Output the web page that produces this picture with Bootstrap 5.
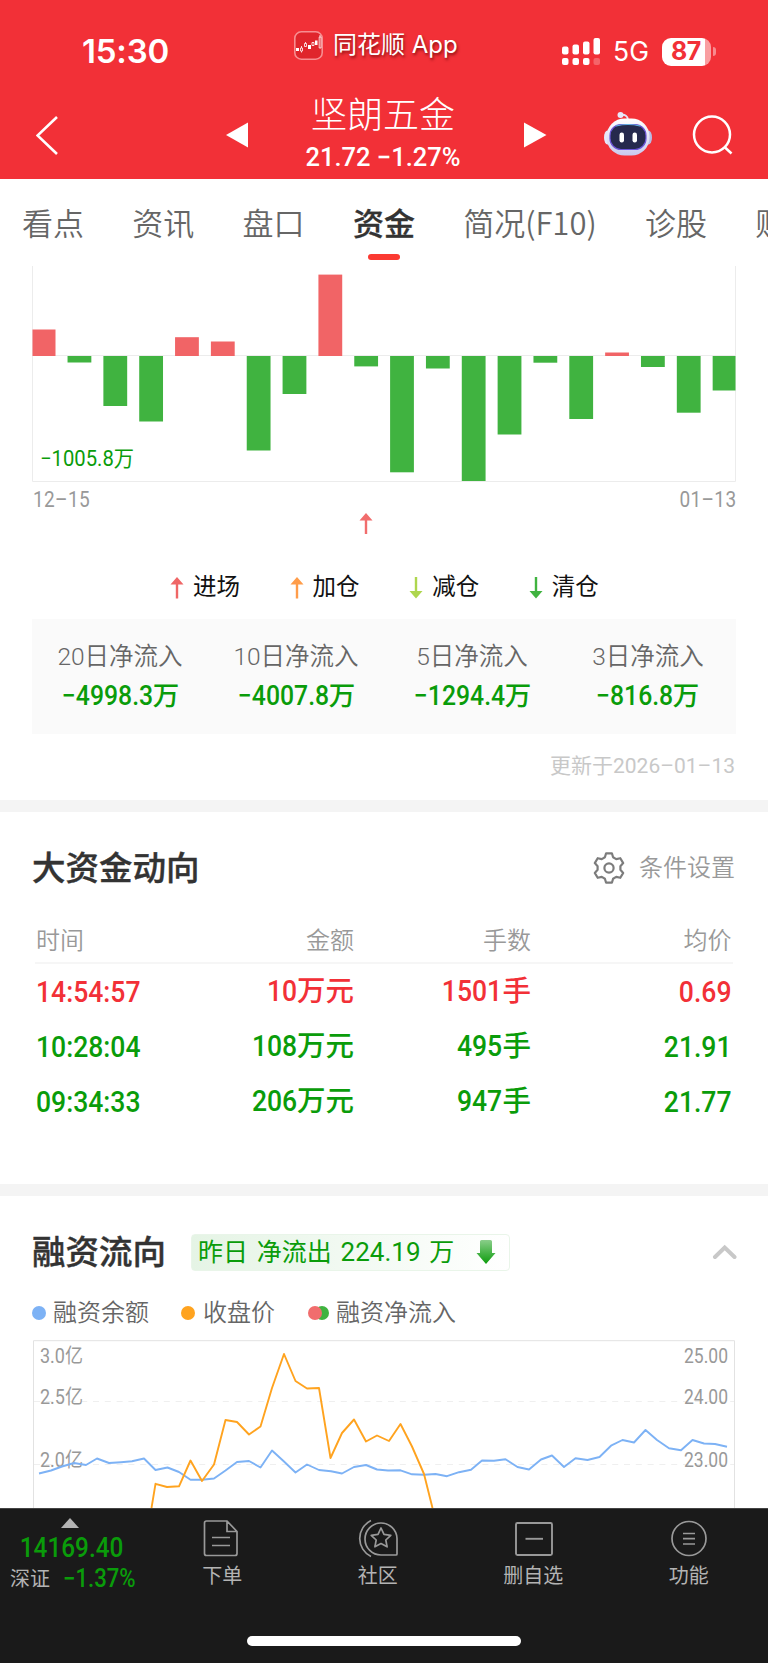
<!DOCTYPE html>
<html lang="zh-CN">
<head>
<meta charset="utf-8">
<meta name="viewport" content="width=device-width, initial-scale=1">
<title>坚朗五金 资金</title>
<link href="https://cdn.jsdelivr.net/npm/bootstrap@5.3.0/dist/css/bootstrap.min.css" rel="stylesheet">
<style>
:root{--up:#f23037;--down:#0a9c0a;--cjk:"Noto Sans CJK SC",sans-serif}
body{width:768px;height:1663px;overflow:hidden;background:#fff;color:#333;font-family:Roboto,var(--cjk);line-height:1}
svg{display:block;flex:none}
.num{font-weight:500}
/* narrowed figures; the side named by the modifier stays put */
.nx{display:inline-block;transform:scaleX(.885);transform-origin:right}
.nx.l{transform-origin:left}
.nx.c{transform-origin:center}
.c-up{color:var(--up)}.c-down{color:var(--down)}
.head-red{height:179px;background:var(--up);color:#fff}
.status{height:90px;padding:13px 52px 0 82px;font-family:Inter,var(--cjk)}
.clock{width:212px;font-size:33px;font-weight:600;letter-spacing:-.2px}
.app-name{width:229px;font-size:24px;text-shadow:1px 2px 3px rgba(90,0,0,.7);margin-top:-13px}
.app-name svg{margin-right:10px}
.net{font-size:26.5px;margin:0 13px 0 12.5px}
.batt{width:49px;height:28px;border-radius:9px;background:linear-gradient(90deg,#fff 43px,#f99ea1 43px);color:var(--up);font-weight:700;font-size:25px;letter-spacing:-.3px;padding-right:1px}
.batt-tip{width:3px;height:9px;border-radius:0 4px 4px 0;background:#f88a8e;margin-left:2px}
.titlebar{height:89px;padding:0 34px 0 36px}
.stock{width:277px;padding-right:6px}
.stock .name{font-size:36px;font-weight:300;line-height:40px;margin-top:-1px}
.stock .quote{font-size:25.5px;line-height:30px;margin-top:6px}
.tabs{height:87px;padding-left:22px;gap:48.3px;font-size:31px;color:#666;font-family:var(--cjk);font-weight:350;white-space:nowrap;overflow:hidden}
.tabs .tab{height:87px;line-height:86px;flex:none}
.tabs .tab.on{color:#333;font-weight:500;position:relative;-webkit-text-stroke:.3px #333}
.tabs .tab.on::after{content:"";position:absolute;left:15px;bottom:6px;width:32px;height:6px;border-radius:3px;background:#fb3a32}
.flow-dates{padding:5px 32px 0 33px;font-size:21.5px;color:#999;height:30px;font-weight:400;letter-spacing:.4px}
.legend-pos{padding:5px 0 0 170px;height:67px;color:#111;font-size:23.5px}
.legend-pos>div{width:119.6px;gap:9px}
.sum-box{margin:0 32px;height:115px;background:#fafafa;text-align:center}
.sum-box .lab{font-size:24.5px;color:#666;font-weight:350;line-height:30px}
.sum-box .val{font-size:28px;line-height:30px;margin-top:9px;padding-right:11px}
.sum-box .val i{font-style:normal;font-size:26.5px}
.updated{height:66px;padding:0 33px 2px;font-size:21px;color:#c8c8c8}
.band{height:12px;background:#f4f4f4}
h2{font-family:var(--cjk);font-size:33.5px;font-weight:500;color:#333;margin:-4px 0 0 -1px;line-height:40px;-webkit-text-stroke:.4px #333}
.big-head{height:112px;padding:0 33px}
.big-head .set{font-size:24px;color:#999;gap:14px;font-weight:350}
.trades{margin:0 35px;height:260px}
.trades .r{display:grid;grid-template-columns:160px 159px 177px 200.500px;height:55px;align-items:center;font-size:30px;text-align:right}
.trades .r>:first-child{text-align:left;padding-left:1px}
.trades .r.th0{height:40px;font-size:24px;font-weight:350;color:#999;border-bottom:2px solid #f6f6f6;padding:0 0 5px}
.trades .r i{font-style:normal;font-size:28.5px}
.fin-head{height:89px;padding:23px 31px 0 33px}
.flow-tag{margin-left:25px;width:319px;height:37px;border:1.5px solid #e9f5e9;border-radius:4px;background:linear-gradient(90deg,#e5f4e5,#fff);color:var(--down);font-size:25px;padding:0 13px 0 6px;white-space:nowrap;word-spacing:2.6px}
.flow-tag b{font-weight:400;font-size:26px}
.fin-legend{height:55px;padding-left:32px;font-size:24px;font-weight:350;color:#666}
.fin-legend .dot{width:14px;height:14px;border-radius:50%;flex:none}
.fin-chart text{font-size:20.5px;fill:#999}
.dock{height:155px;background:#1a1a1a;color:#b3b3b3;font-size:20px;border-top:1px solid #444;position:relative}
.dock .cell{width:155.500px;flex:none;padding-top:8.500px;gap:8px}
.dock .cell svg{height:40px}
.dock .idx{width:144.500px;flex:none;padding:9px 4px 0 0;white-space:nowrap}
.home{position:absolute;left:247px;bottom:17px;width:274px;height:10px;border-radius:5px;background:#fff}
</style>
</head>
<body>
<header class="head-red">
  <div class="status d-flex align-items-center">
    <div class="clock">15:30</div>
    <div class="app-name d-flex align-items-center">
      <svg width="29" height="29" viewBox="0 0 29 29"><rect x=".8" y=".8" width="27.4" height="27.4" rx="6.5" fill="#e0252c" stroke="#f78e91" stroke-width="1.6"/><g fill="#fff"><path d="M2 17h3v3H2zM14 14h3v4h-3zM21 9.500h2.500v4.500H21z"/></g><g fill="none" stroke="#fff" stroke-width=".8"><path d="M6.500 17h2v3h-2zM10.500 12.500h2v3h-2zM18 11.500h2v3h-2zM25.200 6h1.800v11h-1.800zM7.500 15v2M7.500 20v1.500M11.500 11v1.500M26 4v2"/></g></svg>
      <span>同花顺 App</span>
    </div>
    <div class="d-flex align-items-center ms-auto">
      <svg width="39" height="28" viewBox="0 0 39 28" fill="#fff"><rect y="8.500" width="6.500" height="8" rx="2"/><rect x="10.500" y="6.500" width="6.500" height="10" rx="2"/><rect x="21" y="3.500" width="6.500" height="13" rx="2"/><rect x="31.500" width="6.500" height="16.500" rx="2"/><rect y="20" width="6.500" height="7" rx="2"/><rect x="10.500" y="20" width="6.500" height="7" rx="2"/><rect x="21" y="20" width="6.500" height="7" rx="2"/><rect x="31.500" y="20" width="6.500" height="7" rx="2" opacity=".25"/></svg>
      <span class="net">5G</span>
      <span class="batt d-flex align-items-center justify-content-center">87</span><span class="batt-tip"></span>
    </div>
  </div>
  <div class="titlebar d-flex align-items-center">
    <svg width="190" height="40" viewBox="36 115 190 40" fill="none" stroke="#fff" stroke-width="2.600"><path d="M57 117 37.500 135.500 57 154"/></svg>
    <svg width="22" height="26" viewBox="0 0 22 26" fill="#fff"><path d="M22 .5v25L0 13z"/></svg>
    <div class="stock text-center"><div class="name">坚朗五金</div><div class="quote num">21.72 −1.27%</div></div>
    <svg width="23" height="26" viewBox="0 0 23 26" fill="#fff"><path d="M0 .5v25L22.500 13z"/></svg>
    <svg width="50" height="46" viewBox="0 0 50 46" style="margin-left:56px;margin-top:-1px"><defs><linearGradient id="shell" x1="0" y1="0" x2="0" y2="1"><stop offset="0" stop-color="#fff"/><stop offset="1" stop-color="#c9c9ee"/></linearGradient></defs><path d="M17.500 4q7-1 7.500 5" fill="none" stroke="#e3e3f5" stroke-width="2"/><circle cx="17.500" cy="4" r="3" fill="#e8e8fa"/><ellipse cx="4.500" cy="26.500" rx="3.500" ry="7" fill="#e7e7f8"/><ellipse cx="45.500" cy="26.500" rx="3.500" ry="7" fill="#b9bbe4"/><rect x="3.500" y="7.500" width="43" height="37" rx="18" fill="url(#shell)"/><rect x="7" y="13.500" width="36" height="25" rx="11" fill="#26294d" stroke="#6d55d8" stroke-width="1.200"/><path d="M13 15q12-3 24 0" stroke="#63b8df" stroke-width="1.200" fill="none"/><rect x="16.500" y="21.500" width="4.500" height="10" rx="2.200" fill="#fff"/><rect x="29.500" y="21.500" width="4.500" height="10" rx="2.200" fill="#fff"/></svg>
    <svg width="42" height="42" viewBox="0 0 42 42" style="margin-left:39px" fill="none" stroke="#fff" stroke-width="2.500"><circle cx="20" cy="20.500" r="18"/><path d="m32.500 33 7 6.500"/></svg>
  </div>
</header>
<nav class="tabs d-flex">
  <span class="tab">看点</span><span class="tab">资讯</span><span class="tab">盘口</span><span class="tab on">资金</span><span class="tab">简况(F10)</span><span class="tab">诊股</span><span class="tab">财务</span>
</nav>
<svg id="flow" width="768" height="216" viewBox="0 266 768 216"></svg>
<div class="flow-dates d-flex justify-content-between align-items-center"><span class="nx l">12–15</span><span class="nx">01–13</span></div>
<svg width="768" height="40" viewBox="0 512 768 40" fill="#f16d6d"><path d="M366 513l6.500 7.500H367.200V534H364.800V520.500H359.500z"/></svg>
<div class="legend-pos d-flex align-items-center">
  <div class="d-flex align-items-center"><svg width="14" height="22" viewBox="0 0 14 22" fill="#ef6666"><path id="arr" d="M7 0l6.500 7.500H8.200V21.500H5.800V7.500H.5z"/></svg>进场</div>
  <div class="d-flex align-items-center"><svg width="14" height="22" viewBox="0 0 14 22" fill="#ff9d4a"><use href="#arr"/></svg>加仓</div>
  <div class="d-flex align-items-center"><svg width="14" height="22" viewBox="0 0 14 22" fill="#aed64e"><use href="#arr" transform="matrix(1 0 0 -1 0 21.500)"/></svg>减仓</div>
  <div class="d-flex align-items-center"><svg width="14" height="22" viewBox="0 0 14 22" fill="#40b340"><use href="#arr" transform="matrix(1 0 0 -1 0 21.500)"/></svg>清仓</div>
</div>
<div class="sum-box row g-0 align-items-center">
  <div class="col-3"><div class="lab">20日净流入</div><div class="val num c-down"><span class="nx">−4998.3</span><i>万</i></div></div>
  <div class="col-3"><div class="lab">10日净流入</div><div class="val num c-down"><span class="nx">−4007.8</span><i>万</i></div></div>
  <div class="col-3"><div class="lab">5日净流入</div><div class="val num c-down"><span class="nx">−1294.4</span><i>万</i></div></div>
  <div class="col-3"><div class="lab">3日净流入</div><div class="val num c-down"><span class="nx">−816.8</span><i>万</i></div></div>
</div>
<div class="updated d-flex justify-content-end align-items-center">更新于2026–01–13</div>
<div class="band"></div>
<section>
  <div class="big-head d-flex justify-content-between align-items-center">
    <h2>大资金动向</h2>
    <div class="set d-flex align-items-center"><svg width="32" height="32" viewBox="0 0 32 32" fill="none" stroke="#7c7c7c" stroke-width="2.200" stroke-linejoin="round"><path d="M13.100 1.300H18.900L20.100 5.300 23.200 7.100 27.300 6.200 30.200 11.100 27.400 14.200V17.800L30.200 20.900 27.300 25.800 23.200 24.900 20.100 26.700 18.900 30.700H13.100L11.900 26.700 8.800 24.900 4.700 25.800 1.800 20.900 4.600 17.800V14.200L1.800 11.100 4.700 6.200 8.800 7.100 11.900 5.300z"/><circle cx="16" cy="16" r="4.600"/></svg>条件设置</div>
  </div>
  <div class="trades">
    <div class="r th0"><span>时间</span><span>金额</span><span>手数</span><span>均价</span></div>
    <div class="r num c-up"><span><span class="nx l">14:54:57</span></span><span><span class="nx">10</span><i>万元</i></span><span><span class="nx">1501</span><i>手</i></span><span><span class="nx">0.69</span></span></div>
    <div class="r num c-down"><span><span class="nx l">10:28:04</span></span><span><span class="nx">108</span><i>万元</i></span><span><span class="nx">495</span><i>手</i></span><span><span class="nx">21.91</span></span></div>
    <div class="r num c-down"><span><span class="nx l">09:34:33</span></span><span><span class="nx">206</span><i>万元</i></span><span><span class="nx">947</span><i>手</i></span><span><span class="nx">21.77</span></span></div>
  </div>
</section>
<div class="band"></div>
<section>
  <div class="fin-head d-flex align-items-center">
    <h2>融资流向</h2>
    <div class="flow-tag d-flex align-items-center justify-content-between"><span>昨日 净流出 <b>224.19</b> 万</span>
      <svg width="20" height="24" viewBox="0 0 20 24"><defs><linearGradient id="dn" x1="0" y1="0" x2="0" y2="1"><stop offset="0" stop-color="#8ace8a"/><stop offset="1" stop-color="#0c9c0c"/></linearGradient></defs><path d="M5.500 0h9q1.500 0 1.500 1.500V13h3.500L10 24 .5 13H4V1.500Q4 0 5.500 0z" fill="url(#dn)"/></svg></div>
    <svg class="ms-auto" width="25" height="16" viewBox="0 0 25 16" fill="none" stroke="#c8c8c8" stroke-width="4" stroke-linecap="round"><path d="m3 13 9.700-9.500L22.500 13"/></svg>
  </div>
  <div class="fin-legend d-flex align-items-center">
    <span class="dot" style="background:#7db2f5"></span><span style="margin:0 32px 0 7px">融资余额</span>
    <span class="dot" style="background:#ffa31f"></span><span style="margin:0 33px 0 8px">收盘价</span>
    <svg width="21" height="14" viewBox="0 0 21 14"><circle cx="14" cy="7" r="7" fill="#40b340"/><circle cx="7" cy="7" r="7" fill="#f16d6d"/></svg><span style="margin-left:7px">融资净流入</span>
  </div>
  <svg class="fin-chart" width="768" height="168" viewBox="0 1340 768 168">
    <path d="M33.500 1508V1340.700H734.500V1508" fill="none" stroke="#e2e2e2"/>
    <path d="M34 1401.500H734M34 1464.500H734" stroke="#efefef" stroke-dasharray="6 5.800"/>
    <g><text x="40" y="1363" textLength="43" lengthAdjust="spacingAndGlyphs">3.0亿</text><text x="40" y="1404" textLength="43" lengthAdjust="spacingAndGlyphs">2.5亿</text><text x="40" y="1467" textLength="43" lengthAdjust="spacingAndGlyphs">2.0亿</text></g>
    <g><text x="684" y="1363" textLength="44" lengthAdjust="spacingAndGlyphs">25.00</text><text x="684" y="1404" textLength="44" lengthAdjust="spacingAndGlyphs">24.00</text><text x="684" y="1467" textLength="44" lengthAdjust="spacingAndGlyphs">23.00</text></g>
    <g fill="none" stroke-width="1.900" stroke-linejoin="round">
      <path stroke="#7db2f5" d="M39 1473.500 51 1470.500 62 1466.500 74 1463 86 1465 97 1458.500 109 1463 121 1462.200 132 1461.300 144 1458.500 155.500 1470 167.500 1467.500 179 1472 190.500 1479.800 202 1479.800 214 1478.500 225.500 1470.500 237 1462 249 1461 260.500 1467.500 272 1450.500 284 1461.500 295.500 1472.500 307 1464.500 319 1470 331 1471.300 342 1473.500 354 1467 366 1465 377 1469.500 388 1470.500 400.500 1470.300 412 1474.300 424 1474.700 435.500 1474 447 1476.200 459 1472.200 471 1469.800 482 1460.500 494 1460.800 505.500 1459.300 517.500 1467 529 1469.500 541 1459.500 552 1455.500 564 1467 575.500 1458.300 587.500 1460 599.500 1457 611 1445.700 622.500 1440 634 1442.500 645.500 1430 657 1440 669 1448.300 681 1450.300 692.500 1440 704 1443.500 715 1444 727 1446.700"/>
      <path stroke="#ffa31f" d="M151.500 1508 155.500 1483.800 167 1487 179 1486.300 190.500 1460.500 202 1481 214 1464.500 225.500 1420 237 1422 249 1434.500 260.500 1426.500 272 1388 284 1354 295.500 1381 307 1388.500 319 1388 330.500 1458 342 1433 354 1419.500 366 1441.500 377 1435.500 389 1441 400.500 1424 412 1446.500 424 1474 432.500 1508"/>
    </g>
  </svg>
</section>
<footer class="dock d-flex">
  <div class="idx text-center">
    <svg class="mx-auto" width="18" height="10" viewBox="0 0 18 10" fill="#b3b3b3"><path d="M9 0l9 10H0z"/></svg>
    <div class="num c-down" style="font-size:27.500px;line-height:30px;margin-top:5px;padding-left:2px"><span class="nx c">14169.40</span></div>
    <div class="d-flex align-items-center" style="gap:13px;padding-left:10px;line-height:26px;margin-top:3px"><span>深证</span><span class="num c-down nx l" style="font-size:25px">−1.37%</span></div>
  </div>
  <div class="cell d-flex flex-column align-items-center"><svg width="40" height="40" viewBox="202 1517 40 40" fill="none" stroke="#999" stroke-width="1.700"><path d="M206.500 1520H227l10 10.500V1552.500q0 2-2 2H206.500q-2 0-2-2V1522q0-2 2-2zM227 1520v10.500h10M212 1536.500h18M212 1544.500h18"/></svg><span>下单</span></div>
  <div class="cell d-flex flex-column align-items-center"><svg width="42" height="40" viewBox="357 1517 42 40" fill="none" stroke="#999" stroke-width="1.700"><path d="M371 1519.500a20 20 0 0 0 0 36M397 1537.500a16 16 0 1 0-16 16.500H396q1 0 1-1z"/><path stroke-linejoin="round" d="m381 1527 3 6.400 6.800.9-5 4.700 1.300 6.800-6.100-3.300-6.100 3.300 1.300-6.800-5-4.700 6.800-.9z"/></svg><span>社区</span></div>
  <div class="cell d-flex flex-column align-items-center"><svg width="40" height="40" viewBox="514.500 1517 40 40" fill="none" stroke="#999" stroke-width="1.900"><rect x="517.500" y="1522" width="36" height="32" rx="1.500"/><path d="M527 1537.800h17.500"/></svg><span>删自选</span></div>
  <div class="cell d-flex flex-column align-items-center"><svg width="40" height="40" viewBox="669 1517 40 40" fill="none" stroke="#999" stroke-width="1.700"><circle cx="689" cy="1537.500" r="17"/><path d="M683 1532.500h12M683 1537.700h12M683 1543h12"/></svg><span>功能</span></div>
  <div class="home"></div>
</footer>
<script src="https://cdn.jsdelivr.net/npm/bootstrap@5.3.0/dist/js/bootstrap.bundle.min.js"></script>
<script>
// Daily net inflow: positive bars rise above the zero line, negative ones hang below it
const flow=[26.5,-6.5,-50,-65.5,18.8,14.5,-94.5,-38,81.4,-10.4,-116.3,-12.5,-125,-78.5,-6.7,-63,3.5,-11,-56.7,-34.5],zero=356;
let out='<path d="M32.5 266V481.500H735.500V266M32 355.500H736" fill="none" stroke="#ececec"/>';
flow.forEach((v,i)=>{const l=Math.max(31.7+35.84*i,32.5),r=Math.min(31.7+35.84*i+23.8,735.5);
  out+=`<rect x="${l}" y="${v>0?zero-v:zero}" width="${r-l}" height="${Math.abs(v)}" fill="${v>0?'#f16466':'#40b340'}"/>`});
out+='<text x="40" y="466" textLength="94" lengthAdjust="spacingAndGlyphs" font-size="21.5" fill="#0a9c0a">−1005.8万</text>';
document.getElementById('flow').innerHTML=out;
</script>
</body>
</html>
